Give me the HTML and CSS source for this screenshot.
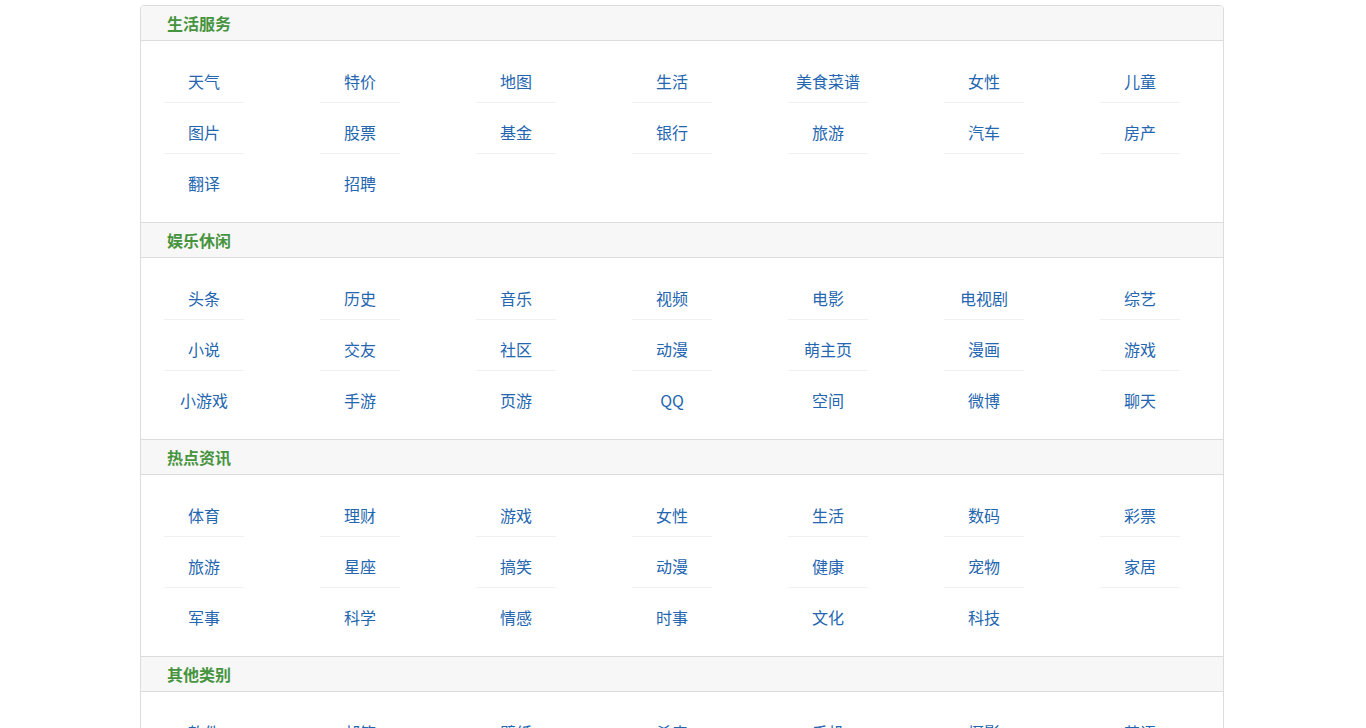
FILE: index.html
```html
<!DOCTYPE html>
<html lang="zh-CN">
<head>
<meta charset="utf-8">
<title>分类导航</title>
<link rel="stylesheet" href="styles.css">
</head>
<body>
<div class="panel">
  <section class="group">
    <h2 class="group-title">生活服务</h2>
    <ul class="links">
      <li><a href="#">天气</a></li>
      <li><a href="#">特价</a></li>
      <li><a href="#">地图</a></li>
      <li><a href="#">生活</a></li>
      <li><a href="#">美食菜谱</a></li>
      <li><a href="#">女性</a></li>
      <li><a href="#">儿童</a></li>
      <li><a href="#">图片</a></li>
      <li><a href="#">股票</a></li>
      <li><a href="#">基金</a></li>
      <li><a href="#">银行</a></li>
      <li><a href="#">旅游</a></li>
      <li><a href="#">汽车</a></li>
      <li><a href="#">房产</a></li>
      <li class="last"><a href="#">翻译</a></li>
      <li class="last"><a href="#">招聘</a></li>
    </ul>
  </section>
  <section class="group">
    <h2 class="group-title">娱乐休闲</h2>
    <ul class="links">
      <li><a href="#">头条</a></li>
      <li><a href="#">历史</a></li>
      <li><a href="#">音乐</a></li>
      <li><a href="#">视频</a></li>
      <li><a href="#">电影</a></li>
      <li><a href="#">电视剧</a></li>
      <li><a href="#">综艺</a></li>
      <li><a href="#">小说</a></li>
      <li><a href="#">交友</a></li>
      <li><a href="#">社区</a></li>
      <li><a href="#">动漫</a></li>
      <li><a href="#">萌主页</a></li>
      <li><a href="#">漫画</a></li>
      <li><a href="#">游戏</a></li>
      <li class="last"><a href="#">小游戏</a></li>
      <li class="last"><a href="#">手游</a></li>
      <li class="last"><a href="#">页游</a></li>
      <li class="last"><a href="#">QQ</a></li>
      <li class="last"><a href="#">空间</a></li>
      <li class="last"><a href="#">微博</a></li>
      <li class="last"><a href="#">聊天</a></li>
    </ul>
  </section>
  <section class="group">
    <h2 class="group-title">热点资讯</h2>
    <ul class="links">
      <li><a href="#">体育</a></li>
      <li><a href="#">理财</a></li>
      <li><a href="#">游戏</a></li>
      <li><a href="#">女性</a></li>
      <li><a href="#">生活</a></li>
      <li><a href="#">数码</a></li>
      <li><a href="#">彩票</a></li>
      <li><a href="#">旅游</a></li>
      <li><a href="#">星座</a></li>
      <li><a href="#">搞笑</a></li>
      <li><a href="#">动漫</a></li>
      <li><a href="#">健康</a></li>
      <li><a href="#">宠物</a></li>
      <li><a href="#">家居</a></li>
      <li class="last"><a href="#">军事</a></li>
      <li class="last"><a href="#">科学</a></li>
      <li class="last"><a href="#">情感</a></li>
      <li class="last"><a href="#">时事</a></li>
      <li class="last"><a href="#">文化</a></li>
      <li class="last"><a href="#">科技</a></li>
    </ul>
  </section>
  <section class="group">
    <h2 class="group-title">其他类别</h2>
    <ul class="links">
      <li><a href="#">软件</a></li>
      <li><a href="#">邮箱</a></li>
      <li><a href="#">壁纸</a></li>
      <li><a href="#">杀毒</a></li>
      <li><a href="#">手机</a></li>
      <li><a href="#">摄影</a></li>
      <li><a href="#">英语</a></li>
    </ul>
  </section>
</div>
</body>
</html>
```
FILE: styles.css
```css
html, body {
  margin: 0;
  padding: 0;
  background: #ffffff;
}

body {
  font-family: "Noto Sans CJK SC", "Liberation Sans", sans-serif;
  font-size: 16px;
}

.panel {
  width: 1084px;
  box-sizing: border-box;
  margin: 5px 0 0 140px;
  border: 1px solid #dcdcdc;
  border-radius: 4px 4px 0 0;
  overflow: hidden;
}

.group + .group .group-title {
  border-top: 1px solid #dcdcdc;
}

.group-title {
  margin: 0;
  height: 34px;
  line-height: 35px;
  padding-left: 26px;
  background: #f7f7f7;
  border-bottom: 1px solid #dcdcdc;
  font-size: 16px;
  font-weight: bold;
  color: #47943f;
}

.links {
  list-style: none;
  margin: 0;
  padding: 21px 0 17px 23px;
  display: grid;
  grid-template-columns: repeat(7, 80px);
  column-gap: 76px;
  row-gap: 10px;
}

.links li {
  height: 40px;
  line-height: 38px;
  padding: 0;
  box-sizing: content-box;
  text-align: center;
  border-bottom: 1px solid #f0f0f0;
}

.links li.last {
  border-bottom-color: transparent;
}

.links a {
  color: #2466b0;
  text-decoration: none;
  font-size: 16px;
}
```
